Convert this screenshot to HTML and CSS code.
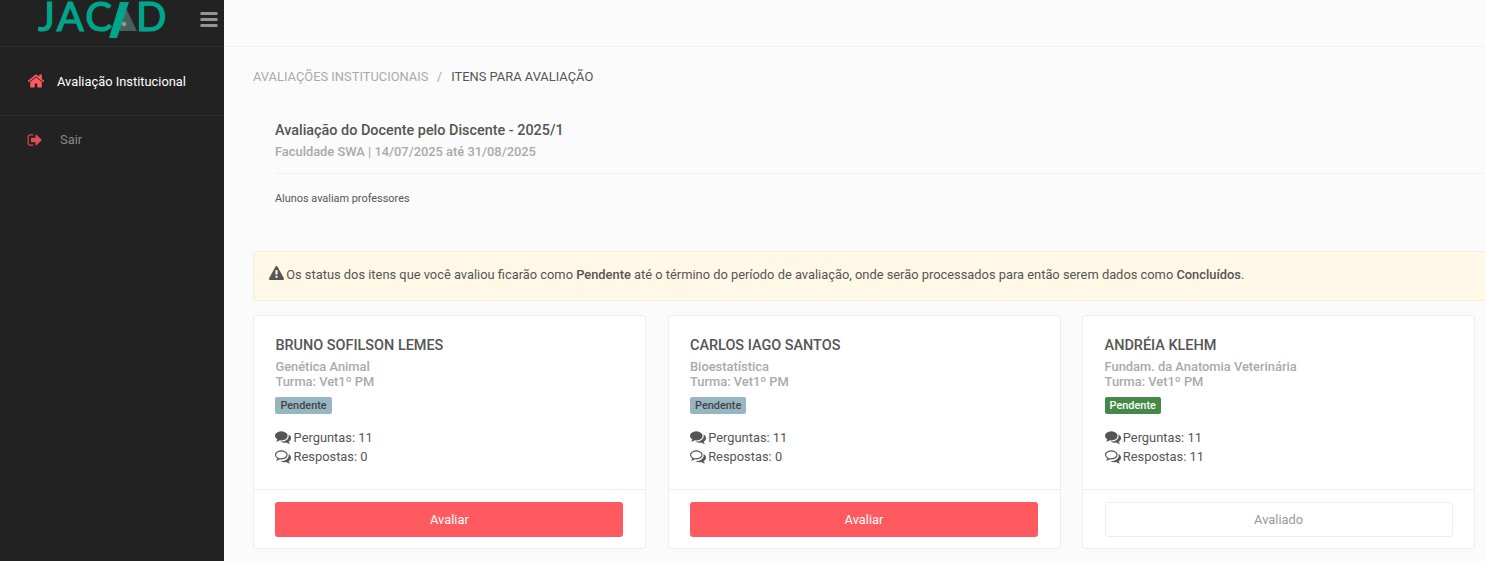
FILE: index.html
```html
<!DOCTYPE html>
<html>
<head>
    <title>Avaliação Institucional</title>
    <link rel="stylesheet" href="styles.css">
</head>
<body>
    <svg class="sprite">
        <symbol id="i-home" viewBox="0 0 1792 1792"><path d="M1472 992v480q0 26-19 45t-45 19h-384v-384h-256v384h-384q-26 0-45-19t-19-45v-480q0-1 .5-3t.5-3l575-474 575 474q1 2 1 6zm223-69l-62 74q-8 9-21 11h-3q-13 0-21-7l-692-577-692 577q-12 8-24 7-13-2-21-11l-62-74q-8-10-7-23.5t11-21.5l719-599q32-26 76-26t76 26l244 204v-195q0-14 9-23t23-9h192q14 0 23 9t9 23v408l219 182q10 8 11 21.5t-7 23.5z"/></symbol>
        <symbol id="i-signout" viewBox="0 0 1792 1792"><path d="M704 1440q0 4 1 20t.5 26.5-3 23.5-10 19.5-20.5 6.5h-320q-119 0-203.5-84.5t-84.5-203.5v-704q0-119 84.5-203.5t203.5-84.5h320q13 0 22.5 9.5t9.5 22.5q0 4 1 20t.5 26.5-3 23.5-10 19.5-20.5 6.5h-320q-66 0-113 47t-47 113v704q0 66 47 113t113 47h312l11.5 1 11.5 3 8 5.5 7 9 2 13.5zm928-544q0 26-19 45l-544 544q-19 19-45 19t-45-19-19-45v-288h-448q-26 0-45-19t-19-45v-384q0-26 19-45t45-19h448v-288q0-26 19-45t45-19 45 19l544 544q19 19 19 45z"/></symbol>
        <symbol id="i-bars" viewBox="0 0 1792 1792" preserveAspectRatio="none"><path d="M1664 1344v128q0 26-19 45t-45 19h-1408q-26 0-45-19t-19-45v-128q0-26 19-45t45-19h1408q26 0 45 19t19 45zm0-512v128q0 26-19 45t-45 19h-1408q-26 0-45-19t-19-45v-128q0-26 19-45t45-19h1408q26 0 45 19t19 45zm0-512v128q0 26-19 45t-45 19h-1408q-26 0-45-19t-19-45v-128q0-26 19-45t45-19h1408q26 0 45 19t19 45z"/></symbol>
        <symbol id="i-warning" viewBox="0 0 1792 1792"><path d="M1024 1375v-190q0-14-9.5-23.5t-22.5-9.5h-192q-13 0-22.5 9.5t-9.5 23.5v190q0 14 9.5 23.5t22.5 9.5h192q13 0 22.5-9.5t9.5-23.5zm-2-374l18-459q0-12-10-19-13-11-24-11h-220q-11 0-24 11-10 7-10 21l17 457q0 10 10 16.5t24 6.5h185q14 0 23.5-6.5t10.5-16.5zm-14-934l768 1408q35 63-2 126-17 29-46.5 46t-63.5 17h-1536q-34 0-63.5-17t-46.5-46q-37-63-2-126l768-1408q17-31 47-49t65-18 65 18 47 49z"/></symbol>
        <symbol id="i-comments" viewBox="0 0 1792 1792"><path d="M1408 768q0 139-94 257t-256.5 186.5-353.5 68.5q-86 0-176-16-124 88-278 128-36 9-86 16h-3q-11 0-20.5-8t-11.5-21q-1-3-1-6.5t.5-6.5 2-6l2.5-5 3.5-5.5 4-5 4.5-5 4-4.5q5-6 23-25t26-29.5 22.5-29 25-38.5 20.5-44q-124-72-195-177t-71-224q0-139 94-257t256.5-186.5 353.5-68.5 353.5 68.5 256.5 186.5 94 257zm384 256q0 120-71 224.5t-195 176.5q10 24 20.5 44t25 38.5 22.5 29 26 29.5 23 25q1 1 4 4.5t4.5 5 4 5 3.5 5.5l2.5 5 2 6 .5 6.5-1 6.5q-3 14-13 22t-22 7q-50-7-86-16-154-40-278-128-90 16-176 16-271 0-472-132 58 4 88 4 161 0 309-45t264-129q125-92 192-212t67-254q0-77-23-152 129 71 204 178t75 230z"/></symbol>
        <symbol id="i-comments-o" viewBox="0 0 1792 1792"><path d="M704 384q-153 0-286 52t-211.5 141-78.5 191q0 82 53 158t149 132l97 56-35 84q34-20 62-39l44-31 53 10q78 14 153 14 153 0 286-52t211.5-141 78.5-191-78.5-191-211.5-141-286-52zm0-128q191 0 353.5 68.5t256.5 186.5 94 257-94 257-256.5 186.5-353.5 68.5q-86 0-176-16-124 88-278 128-36 9-86 16h-3q-11 0-20.5-8t-11.5-21q-1-3-1-6.5t.5-6.5 2-6l2.5-5 3.5-5.5 4-5 4.5-5 4-4.5q5-6 23-25t26-29.5 22.5-29 25-38.5 20.5-44q-124-72-195-177t-71-224q0-139 94-257t256.5-186.5 353.5-68.5zm819 1228q10 24 20.5 44t25 38.5 22.5 29 26 29.5 23 25q1 1 4 4.5t4.5 5 4 5 3.5 5.5l2.5 5 2 6 .5 6.5-1 6.5q-3 14-13 22t-22 7q-50-7-86-16-154-40-278-128-90 16-176 16-271 0-472-132 58 4 88 4 161 0 309-45t264-129q125-92 192-212t67-254q0-77-23-152 129 71 204 178t75 230q0 120-71 224.5t-195 176.5z"/></symbol>
    </svg>

    <div class="app">
        <aside class="sidebar">
            <div class="brand">
                <svg class="logo" width="130" height="40" viewBox="0 0 130 40">
                    <polygon class="logo-shade" points="87,6 99,31 81,31"/>
                    <circle class="logo-dot" cx="86" cy="24" r="2.3"/>
                    <polygon class="logo-teal" points="82,2 91,2 79,38 71,38"/>
                    <text class="logo-text" x="0" y="31" textLength="74">JAC</text>
                    <text class="logo-text" x="98" y="31">D</text>
                </svg>
                <svg class="icon menu-toggle"><use href="#i-bars"/></svg>
            </div>
            <a class="nav-item active">
                <svg class="icon nav-icon"><use href="#i-home"/></svg>
                <span>Avaliação Institucional</span>
            </a>
            <a class="nav-item logout">
                <svg class="icon nav-icon"><use href="#i-signout"/></svg>
                <span>Sair</span>
            </a>
        </aside>

        <div class="page">
            <div class="topbar"></div>
            <main class="content">
                <div class="breadcrumb">
                    <span>AVALIAÇÕES INSTITUCIONAIS</span>
                    <span class="sep">/</span>
                    <span class="current">ITENS PARA AVALIAÇÃO</span>
                </div>

                <section class="intro">
                    <h1>Avaliação do Docente pelo Discente - 2025/1</h1>
                    <div class="intro-sub">Faculdade SWA | 14/07/2025 até 31/08/2025</div>
                    <p>Alunos avaliam professores</p>
                </section>

                <div class="alert">
                    <svg class="icon"><use href="#i-warning"/></svg>
                    Os status dos itens que você avaliou ficarão como <b>Pendente</b> até o término do período de avaliação, onde serão processados para então serem dados como <b>Concluídos</b>.
                </div>

                <div class="cards">
                    <div class="card">
                        <div class="card-body">
                            <h2>BRUNO SOFILSON LEMES</h2>
                            <div class="card-sub">Genética Animal<br>Turma: Vet1º PM</div>
                            <span class="badge">Pendente</span>
                            <div class="stat"><svg class="icon"><use href="#i-comments"/></svg> Perguntas: 11</div>
                            <div class="stat"><svg class="icon"><use href="#i-comments-o"/></svg> Respostas: 0</div>
                        </div>
                        <div class="card-footer"><a class="btn">Avaliar</a></div>
                    </div>
                    <div class="card">
                        <div class="card-body">
                            <h2>CARLOS IAGO SANTOS</h2>
                            <div class="card-sub">Bioestatística<br>Turma: Vet1º PM</div>
                            <span class="badge">Pendente</span>
                            <div class="stat"><svg class="icon"><use href="#i-comments"/></svg> Perguntas: 11</div>
                            <div class="stat"><svg class="icon"><use href="#i-comments-o"/></svg> Respostas: 0</div>
                        </div>
                        <div class="card-footer"><a class="btn">Avaliar</a></div>
                    </div>
                    <div class="card">
                        <div class="card-body">
                            <h2>ANDRÉIA KLEHM</h2>
                            <div class="card-sub">Fundam. da Anatomia Veterinária<br>Turma: Vet1º PM</div>
                            <span class="badge done">Pendente</span>
                            <div class="stat"><svg class="icon"><use href="#i-comments"/></svg> Perguntas: 11</div>
                            <div class="stat"><svg class="icon"><use href="#i-comments-o"/></svg> Respostas: 11</div>
                        </div>
                        <div class="card-footer"><a class="btn disabled">Avaliado</a></div>
                    </div>
                </div>
            </main>
        </div>
    </div>
</body>
</html>
```

FILE: styles.css
```css
html, body {
    height: 100%;
}

body {
    font-family: Roboto, "Liberation Sans", sans-serif;
    font-size: 12.87px;
    margin: 0;
    background: #fbfbfb;
    color: #555;
    overflow: hidden;
}

.sprite {
    display: none;
}

.icon {
    width: 1em;
    height: 1em;
    fill: currentColor;
    vertical-align: -2px;
}

.app {
    display: flex;
    height: 100%;
}

/* Sidebar */
.sidebar {
    width: 224px;
    flex-shrink: 0;
    background: #222;
}

.brand {
    display: flex;
    align-items: center;
    justify-content: space-between;
    height: 46px;
    padding: 0 5px 0 38px;
    box-sizing: content-box;
    border-bottom: 1px solid #2e2e2e;
    overflow: hidden;
}

.logo {
    display: block;
    align-self: flex-start;
}

.logo-text {
    font-family: Lato, sans-serif;
    font-size: 40px;
    fill: #00a68c;
    stroke: #00a68c;
    stroke-width: 1.2px;
}

.logo-teal {
    fill: #00a68c;
}

.logo-shade {
    fill: #47605c;
}

.logo-dot {
    fill: #8c9a98;
}

.menu-toggle {
    width: 20px;
    height: 21px;
    color: #949494;
    margin-bottom: 7px;
}

.nav-item {
    display: flex;
    align-items: center;
    color: #fff;
    padding: 0 27px;
    height: 68px;
    border-bottom: 1px solid #2e2e2e;
}

.nav-icon {
    width: 18px;
    height: 18px;
    color: #ff5a5f;
    margin-right: 12px;
}

.nav-item.logout {
    height: 47px;
    border-bottom: none;
    color: #888;
}

.nav-item.logout .nav-icon {
    width: 16px;
    height: 16px;
    color: #e04e50;
    margin-right: 17px;
}

/* Main area */
.page {
    flex: 1;
    min-width: 0;
}

.topbar {
    height: 46px;
    border-bottom: 1px solid #f2f2f2;
}

.content {
    padding: 22px 0 0 29px;
}

.breadcrumb {
    font-size: 12.9px;
    line-height: 15px;
    color: #aaa;
}

.breadcrumb .sep {
    margin: 0 6px 0 5px;
}

.breadcrumb .current {
    color: #555;
}

.intro {
    padding: 37px 0 0 22px;
    margin-bottom: 44px;
}

.intro h1 {
    font-size: 14.4px;
    font-weight: 500;
    line-height: 20px;
    margin: 0;
    color: #555;
}

.intro-sub {
    font-weight: 500;
    line-height: 20px;
    margin-top: 1px;
    color: #aaa;
    padding-bottom: 11px;
    border-bottom: 1px solid #f0f0f0;
}

.intro p {
    font-size: 10.9px;
    line-height: 16px;
    margin: 17px 0 0;
    color: #555;
}

.alert {
    background: #fff8e6;
    border: 1px solid #f5eedc;
    border-right: none;
    border-radius: 3px 0 0 3px;
    padding: 14px 15px 16px;
    line-height: 18px;
    margin-bottom: 14px;
}

.alert .icon {
    width: 15px;
    height: 15px;
    margin-right: -1px;
}

.alert b {
    font-weight: 500;
}

/* Cards */
.cards {
    display: grid;
    grid-template-columns: repeat(3, 393px);
    column-gap: 21.6px;
    margin-left: -0.1px;
}

.card {
    background: #fff;
    border: 1px solid #eee;
    border-radius: 3px;
}

.card-body {
    padding: 22px 21.5px 23px;
    height: 128px;
    box-sizing: content-box;
}

.card-body h2 {
    font-size: 14.45px;
    font-weight: 500;
    line-height: 16px;
    margin: 0 0 5px;
    color: #555;
}

.card-sub {
    font-weight: 500;
    line-height: 15px;
    color: #aaa;
    margin-bottom: 8px;
}

.badge {
    display: inline-block;
    font-size: 10.9px;
    font-weight: 500;
    line-height: 17px;
    padding: 0 5px;
    border-radius: 2px;
    background: #98b5c2;
    color: #444;
    margin-bottom: 14px;
}

.badge.done {
    background: #468847;
    color: #fff;
}

.stat {
    line-height: 19px;
}

.stat .icon {
    width: 16px;
    height: 16px;
    vertical-align: -3px;
    margin-right: -1px;
}

.card-footer {
    padding: 12px 21.5px 11px;
    border-top: 1px solid #eee;
}

.btn {
    display: block;
    height: 35px;
    line-height: 35px;
    text-align: center;
    border-radius: 3px;
    background: #ff5a5f;
    color: #fff;
}

.btn.disabled {
    height: 33px;
    line-height: 33px;
    background: #fff;
    border: 1px solid #eee;
    color: #999;
}
```
